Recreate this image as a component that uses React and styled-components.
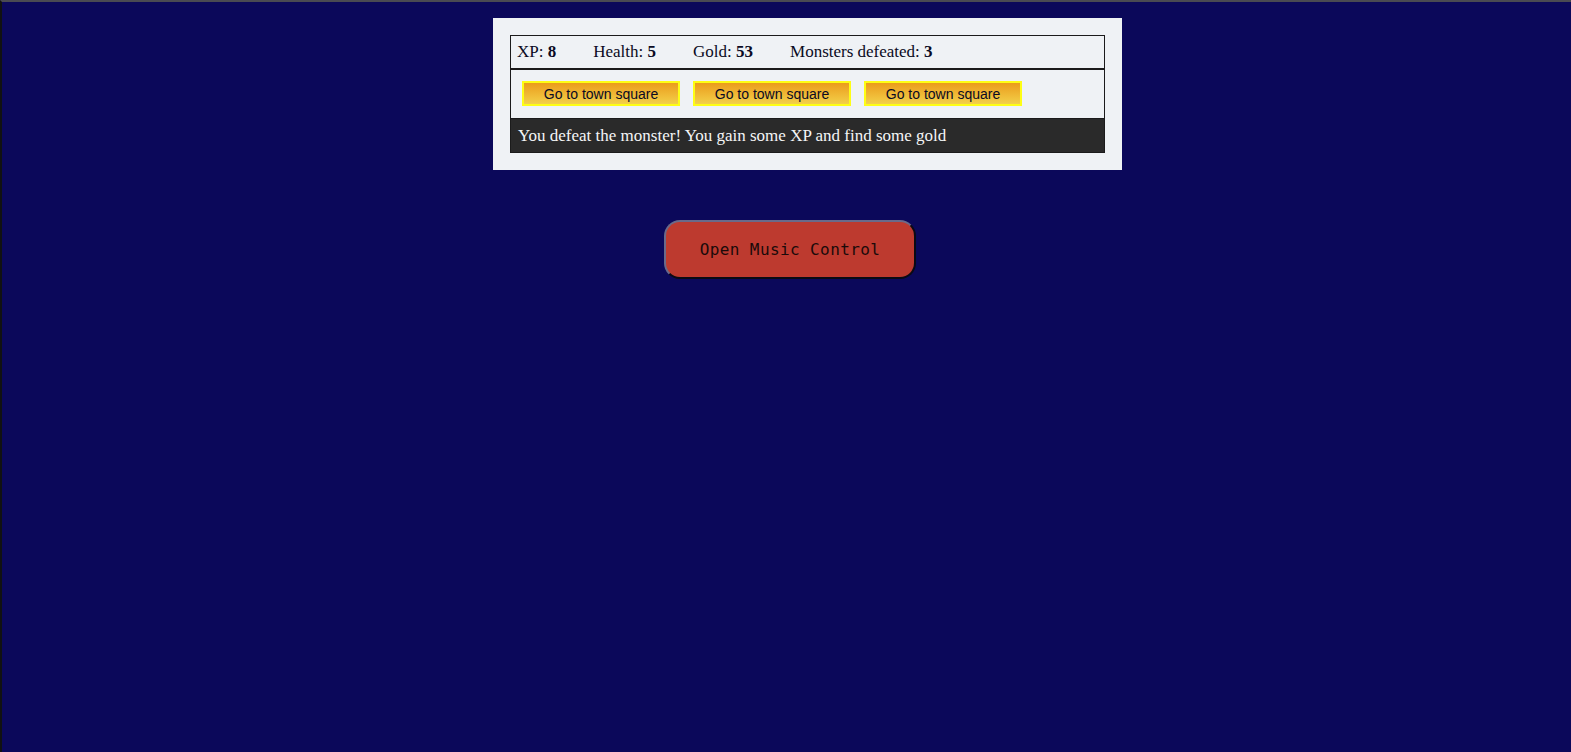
import React from 'react';
import styled, { createGlobalStyle } from 'styled-components';

const GlobalStyle = createGlobalStyle`
  html, body {
    margin: 0;
    padding: 0;
    background: #0b085a;
  }
`

const stats = [
  { label: 'XP', value: 8 },
  { label: 'Health', value: 5 },
  { label: 'Gold', value: 53 },
  { label: 'Monsters defeated', value: 3 },
]

function App() {
  return (
    <>
      <GlobalStyle />
      <Page>
        <Game>
          <Board>
            <Stats>
              {stats.map(s => (
                <Stat key={s.label}>
                  {s.label}: <strong>{s.value}</strong>
                </Stat>
              ))}
            </Stats>
            <Controls>
              <GoldButton>Go to town square</GoldButton>
              <GoldButton>Go to town square</GoldButton>
              <GoldButton>Go to town square</GoldButton>
            </Controls>
            <Message>You defeat the monster! You gain some XP and find some gold</Message>
          </Board>
        </Game>
        <MusicButton>Open Music Control</MusicButton>
      </Page>
    </>
  )
}

const Page = styled.div`
  min-height: 752px;
  box-sizing: border-box;
  border-top: 2px solid #4a4a52;
  border-left: 2px solid #111;
  background: #0b085a;
  display: flex;
  flex-direction: column;
  align-items: center;
  padding-top: 16px;
`

const Game = styled.div`
  width: 629px;
  box-sizing: border-box;
  background: #eff2f5;
  padding: 17px;
  margin-left: 42px;
`

const Board = styled.div`
  border: 1px solid #1b1b1b;
  font-family: "Liberation Serif", "Times New Roman", serif;
  font-size: 17px;
`

const Stats = styled.div`
  display: flex;
  align-items: center;
  height: 32px;
  padding: 0 6px;
  border-bottom: 2px solid #1b1b1b;
  color: #0a0a23;
`

const Stat = styled.span`
  margin-right: 37px;
`

const Controls = styled.div`
  display: flex;
  gap: 13px;
  padding: 11px 11px 12px;
  border-bottom: 1px solid #1b1b1b;
`

const GoldButton = styled.button`
  width: 158px;
  height: 25px;
  box-sizing: border-box;
  border: 2px solid #fefe14;
  background: linear-gradient(#eb9c1c, #f3d04a);
  color: #0a0a23;
  font-family: "Liberation Sans", Arial, sans-serif;
  font-size: 14px;
  padding: 0;
  cursor: pointer;
`

const Message = styled.div`
  background: #2a2a2a;
  color: #f5f6f7;
  height: 33px;
  padding: 0 7px;
  display: flex;
  align-items: center;
`

const MusicButton = styled.button`
  margin-top: 50px;
  margin-left: 7px;
  width: 252px;
  height: 59px;
  box-sizing: border-box;
  border-radius: 16px;
  background: #bd3a2f;
  border: 2px solid;
  border-color: #6a6a8a #0a0a14 #0a0a14 #6a6a8a;
  color: #1a0a0a;
  font-family: "DejaVu Sans Mono", "Liberation Mono", monospace;
  font-size: 16px;
  letter-spacing: 0.4px;
  cursor: pointer;
`

export default App
